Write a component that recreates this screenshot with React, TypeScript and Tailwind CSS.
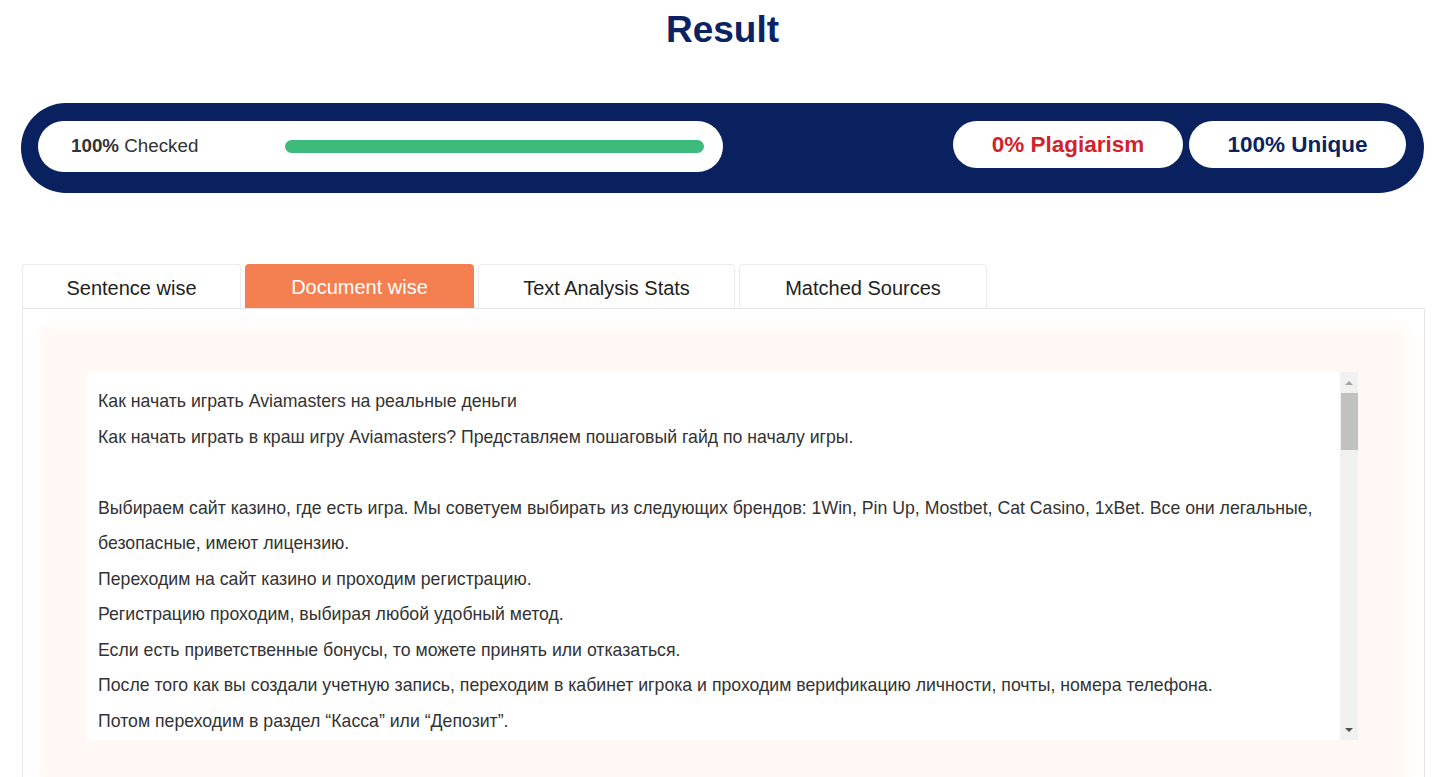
import React from "react";

const lines: string[] = [
  "Как начать играть Aviamasters на реальные деньги",
  "Как начать играть в краш игру Aviamasters? Представляем пошаговый гайд по началу игры.",
  "",
  "Выбираем сайт казино, где есть игра. Мы советуем выбирать из следующих брендов: 1Win, Pin Up, Mostbet, Cat Casino, 1xBet. Все они легальные, безопасные, имеют лицензию.",
  "Переходим на сайт казино и проходим регистрацию.",
  "Регистрацию проходим, выбирая любой удобный метод.",
  "Если есть приветственные бонусы, то можете принять или отказаться.",
  "После того как вы создали учетную запись, переходим в кабинет игрока и проходим верификацию личности, почты, номера телефона.",
  "Потом переходим в раздел “Касса” или “Депозит”.",
];

const tabs = [
  { label: "Sentence wise", w: "w-[219px]", active: false },
  { label: "Document wise", w: "w-[229px]", active: true },
  { label: "Text Analysis Stats", w: "w-[257px]", active: false },
  { label: "Matched Sources", w: "w-[248px]", active: false },
];

export default function App() {
  return (
    <div className="min-h-screen bg-white font-['Liberation_Sans',Arial,sans-serif] overflow-hidden">
      <h1 className="pt-[11px] text-center text-[37px] leading-none font-bold text-[#0b2362]">
        Result
      </h1>

      <div className="mx-[21px] mt-[55px] h-[90px] rounded-full bg-[#0a215f] flex items-start pt-[18px] pl-[17px] pr-[18px]">
        <div className="w-[685px] h-[51px] rounded-full bg-white flex items-center pl-[33px]">
          <span className="w-[214px] text-[18.8px] text-[#333]">
            <b>100%</b> Checked
          </span>
          <div className="w-[419px] h-[13px] rounded-full bg-[#3dbb7d]" />
        </div>
        <div className="ml-auto flex gap-[6px]">
          <div className="w-[230px] h-[47px] rounded-full bg-white flex items-center justify-center text-[22.5px] font-bold text-[#d1232a]">
            0% Plagiarism
          </div>
          <div className="w-[217px] h-[47px] rounded-full bg-white flex items-center justify-center text-[22.5px] font-bold text-[#0b2362]">
            100% Unique
          </div>
        </div>
      </div>

      <div className="ml-[22px] mr-[20px] mt-[71px]">
        <div className="flex gap-[4px]">
          {tabs.map((t) => (
            <div
              key={t.label}
              className={
                t.active
                  ? `${t.w} h-[44px] rounded-t-[4px] bg-[#f47f51] text-white flex items-center justify-center text-[20px] pt-[2px]`
                  : `${t.w} h-[44px] rounded-t-[4px] bg-white border border-b-0 border-[#ececec] text-[#222] flex items-center justify-center text-[20px] pt-[2px]`
              }
            >
              {t.label}
            </div>
          ))}
        </div>
        <div className="border border-b-0 border-[#e6e6e6] pt-[26px] px-[24px] h-[500px]">
          <div className="bg-[#fff8f5] shadow-[0_0_12px_6px_rgba(255,245,240,0.9)] pt-[37px] pl-[40px] pr-[42px] pb-[37px]">
            <div className="flex h-[368px] bg-white">
              <div className="flex-1 overflow-hidden px-[11px] pt-[12px] text-[17.7px] leading-[35.5px] text-[#333]">
                {lines.map((l, i) => (
                  <div key={i}>{l === "" ? "\u00a0" : l}</div>
                ))}
              </div>
              <div className="w-[18px] bg-[#f1f1f1] flex flex-col items-center">
                <div className="h-[21px] flex items-center justify-center">
                  <div className="w-0 h-0 border-l-[4px] border-r-[4px] border-b-[4px] border-l-transparent border-r-transparent border-b-[#a3a3a3]" />
                </div>
                <div className="w-[17px] h-[57px] bg-[#c1c1c1]" />
                <div className="flex-1" />
                <div className="h-[21px] flex items-center justify-center">
                  <div className="w-0 h-0 border-l-[4px] border-r-[4px] border-t-[4px] border-l-transparent border-r-transparent border-t-[#505050]" />
                </div>
              </div>
            </div>
          </div>
        </div>
      </div>
    </div>
  );
}
